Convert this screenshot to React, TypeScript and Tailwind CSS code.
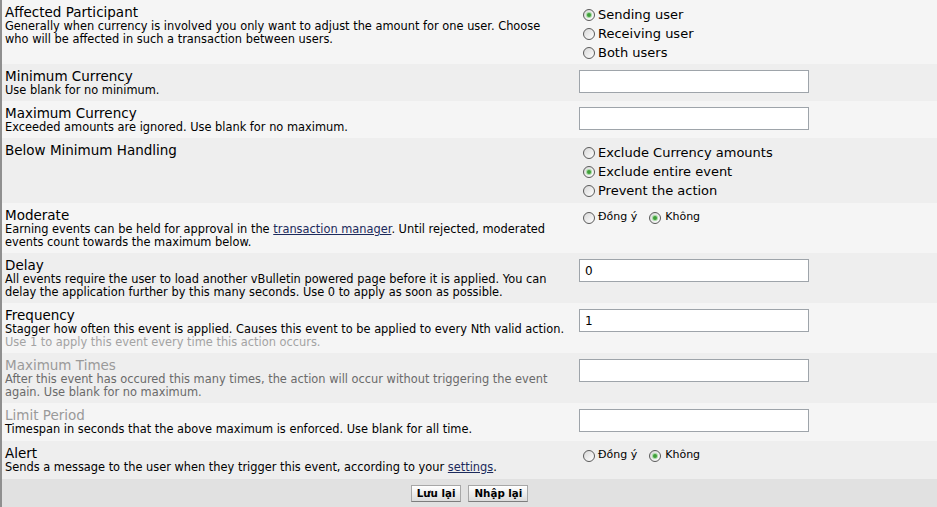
import React from "react";

type Row = {
  title: string;
  desc: React.ReactNode[];
  muted?: boolean;
  descClass?: string;
  h: string;
  alt: boolean;
  control: React.ReactNode;
};

function Radio({ checked }: { checked?: boolean }) {
  return (
    <span className="relative inline-block w-[12px] h-[12px] shrink-0 rounded-full border border-[#5a5a5a] bg-gradient-to-br from-[#d8d8d8] to-white">
      {checked && (
        <span className="absolute left-[3px] top-[3px] w-[4px] h-[4px] rounded-full bg-[#3f9e3a] shadow-[0_0_0_1px_#a8dba4]" />
      )}
    </span>
  );
}

function RadioList({ items, checked }: { items: string[]; checked: number }) {
  return (
    <div className="pt-[5px] pl-[8px]">
      {items.map((label, i) => (
        <label key={label} className="flex items-center gap-[3px] h-[19px] text-[13px] text-black">
          <Radio checked={i === checked} />
          {label}
        </label>
      ))}
    </div>
  );
}

function YesNo({ yes }: { yes?: boolean }) {
  return (
    <div className="pt-[5px] pl-[8px] flex items-center h-[24px] text-[11px] text-black">
      <span className="flex items-center gap-[3px]">
        <Radio checked={yes} />
        Đồng ý
      </span>
      <span className="flex items-center gap-[4px] ml-[12px]">
        <Radio checked={!yes} />
        Không
      </span>
    </div>
  );
}

function TextBox({ value }: { value?: string }) {
  return (
    <div className="pt-[6px] pl-[4px]">
      <div className="w-[230px] h-[23px] border border-[#9ea4aa] bg-white px-[5px] flex items-center text-[12px] text-black">
        {value}
      </div>
    </div>
  );
}

const link = "underline text-[#1c2a5c]";

const rows: Row[] = [
  {
    title: "Affected Participant",
    desc: [
      "Generally when currency is involved you only want to adjust the amount for one user. Choose",
      "who will be affected in such a transaction between users.",
    ],
    h: "h-[64px]",
    alt: false,
    control: <RadioList items={["Sending user", "Receiving user", "Both users"]} checked={0} />,
  },
  {
    title: "Minimum Currency",
    desc: ["Use blank for no minimum."],
    h: "h-[37px]",
    alt: true,
    control: <TextBox />,
  },
  {
    title: "Maximum Currency",
    desc: ["Exceeded amounts are ignored. Use blank for no maximum."],
    h: "h-[37px]",
    alt: false,
    control: <TextBox />,
  },
  {
    title: "Below Minimum Handling",
    desc: [],
    h: "h-[65px]",
    alt: true,
    control: (
      <RadioList
        items={["Exclude Currency amounts", "Exclude entire event", "Prevent the action"]}
        checked={1}
      />
    ),
  },
  {
    title: "Moderate",
    desc: [
      <>
        Earning events can be held for approval in the <span className={link}>transaction manager</span>. Until rejected, moderated
      </>,
      "events count towards the maximum below.",
    ],
    h: "h-[50px]",
    alt: false,
    control: <YesNo />,
  },
  {
    title: "Delay",
    desc: [
      "All events require the user to load another vBulletin powered page before it is applied. You can",
      "delay the application further by this many seconds. Use 0 to apply as soon as possible.",
    ],
    h: "h-[50px]",
    alt: true,
    control: <TextBox value="0" />,
  },
  {
    title: "Frequency",
    desc: [
      "Stagger how often this event is applied. Causes this event to be applied to every Nth valid action.",
      <span className="text-[#a3a3a3]">Use 1 to apply this event every time this action occurs.</span>,
    ],
    h: "h-[50px]",
    alt: false,
    control: <TextBox value="1" />,
  },
  {
    title: "Maximum Times",
    muted: true,
    descClass: "text-[#6a6a6a]",
    desc: [
      "After this event has occured this many times, the action will occur without triggering the event",
      "again. Use blank for no maximum.",
    ],
    h: "h-[50px]",
    alt: true,
    control: <TextBox />,
  },
  {
    title: "Limit Period",
    muted: true,
    desc: ["Timespan in seconds that the above maximum is enforced. Use blank for all time."],
    h: "h-[38px]",
    alt: false,
    control: <TextBox />,
  },
  {
    title: "Alert",
    desc: [
      <>
        Sends a message to the user when they trigger this event, according to your <span className={link}>settings</span>.
      </>,
    ],
    h: "h-[38px]",
    alt: true,
    control: <YesNo />,
  },
];

const btn =
  "h-[17px] px-[5px] border border-[#a7a7a7] border-b-[#7d7d7d] bg-gradient-to-b from-white to-[#dcdcdc] text-[10.3px] font-bold text-black leading-none";

export default function App() {
  return (
    <div
      className="w-[937px] h-[507px] overflow-hidden border-l-2 border-[#8f8f8f] bg-[#f5f5f5]"
      style={{ fontFamily: '"DejaVu Sans", Verdana, sans-serif' }}
    >
      {rows.map((r) => (
        <div
          key={r.title}
          className={`flex ${r.h} ${r.alt ? "bg-[#eeeeee]" : "bg-[#f5f5f5]"}`}
        >
          <div className="w-[573px] shrink-0 pl-[3px] pt-[5px] whitespace-nowrap">
            <div className={`text-[13.5px] leading-[15px] ${r.muted ? "text-[#9a9a9a]" : "text-black"}`}>
              {r.title}
            </div>
            {r.desc.map((line, i) => (
              <div key={i} className={`text-[11.4px] leading-[13px] ${r.descClass ?? "text-black"}`}>
                {line}
              </div>
            ))}
          </div>
          <div className="flex-1">{r.control}</div>
        </div>
      ))}

      <div className="h-[28px] bg-[#e1e1e1] flex items-center justify-center gap-[7px]">
        <button className={btn}>Lưu lại</button>
        <button className={btn}>Nhập lại</button>
      </div>
    </div>
  );
}
